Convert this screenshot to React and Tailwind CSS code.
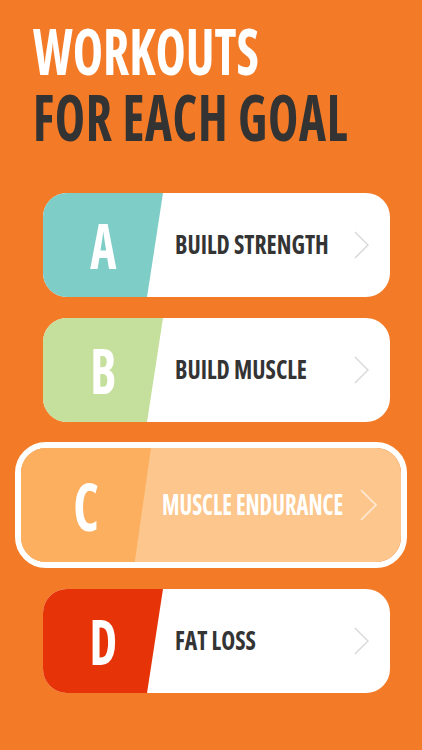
import React from 'react';

const goals = [
  { letter: 'A', label: 'BUILD STRENGTH', tone: 'bg-[#7ecdc7]' },
  { letter: 'B', label: 'BUILD MUSCLE', tone: 'bg-[#c5df9c]' },
  { letter: 'C', label: 'MUSCLE ENDURANCE', active: true },
  { letter: 'D', label: 'FAT LOSS', tone: 'bg-[#e63308]' },
];

const Chevron = ({ className }) => (
  <svg viewBox="0 0 16 30" fill="none" className={className}>
    <path d="M1 1 L15 15 L1 29" stroke="currentColor" strokeWidth="1.6" strokeLinejoin="miter" />
  </svg>
);

const GoalCard = ({ goal }) => {
  if (goal.active) {
    return (
      <div className="mx-[15px] mt-[20px] rounded-[31px] border-[6px] border-white overflow-hidden">
        <div className="flex items-center h-[114px] bg-[#fdc68c]">
          <div className="w-[130px] shrink-0 self-stretch bg-[#fdaf60] [clip-path:polygon(0_0,100%_0,87.5%_100%,0_100%)] flex items-center justify-center">
            <span className="inline-block scale-x-[0.8] text-[66px] leading-none font-bold font-stretch-condensed text-white">
              {goal.letter}
            </span>
          </div>
          <div className="flex-1 min-w-0 pl-[11px]">
            <span className="inline-block origin-left scale-x-[0.78] text-[29px] leading-none font-bold font-stretch-condensed text-white whitespace-nowrap">
              {goal.label}
            </span>
          </div>
          <Chevron className="w-[17px] h-[32px] shrink-0 mr-[24px] text-white/60" />
        </div>
      </div>
    );
  }

  return (
    <div className="ml-[43px] mr-[32px] mt-[21px] first:mt-0 flex items-center h-[104px] rounded-[24px] bg-white overflow-hidden">
      <div className={`w-[120px] shrink-0 self-stretch ${goal.tone} [clip-path:polygon(0_0,100%_0,86.7%_100%,0_100%)] flex items-center justify-center`}>
        <span className="inline-block scale-x-[0.8] text-[62px] leading-none font-bold font-stretch-condensed text-white">
          {goal.letter}
        </span>
      </div>
      <div className="flex-1 min-w-0 pl-[12px]">
        <span className="inline-block origin-left scale-x-[0.875] text-[27px] leading-none font-bold font-stretch-condensed text-[#343434] whitespace-nowrap">
          {goal.label}
        </span>
      </div>
      <Chevron className="w-[15px] h-[28px] shrink-0 mr-[21px] text-[#d9d9d9]" />
    </div>
  );
};

export default function App() {
  return (
    <div className="min-h-[750px] bg-[#f37a26] font-['Open_Sans',sans-serif] pt-[18px] pb-[40px]">
      <h1 className="pl-[33px] text-[64px] leading-[66px] font-bold font-stretch-condensed">
        <span className="block origin-left scale-x-[0.8] text-white whitespace-nowrap">WORKOUTS</span>
        <span className="block origin-left scale-x-[0.8] tracking-[0.8px] text-[#333333] whitespace-nowrap">FOR EACH GOAL</span>
      </h1>

      <div className="mt-[43px] flex flex-col">
        {goals.map((goal) => (
          <GoalCard key={goal.letter} goal={goal} />
        ))}
      </div>
    </div>
  );
}
